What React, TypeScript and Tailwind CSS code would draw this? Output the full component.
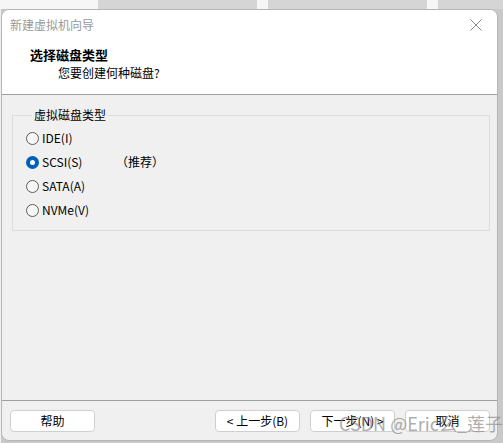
import { useState } from 'react'

const font = { fontFamily: '"Noto Sans CJK SC", "Noto Sans", sans-serif' }

type DiskType = 'ide' | 'scsi' | 'sata' | 'nvme'

const diskTypes: { id: DiskType; label: string; note?: string }[] = [
  { id: 'ide', label: 'IDE(I)' },
  { id: 'scsi', label: 'SCSI(S)', note: '（推荐）' },
  { id: 'sata', label: 'SATA(A)' },
  { id: 'nvme', label: 'NVMe(V)' },
]

function Radio({ checked }: { checked: boolean }) {
  if (checked) {
    return (
      <span className="w-[13px] h-[13px] rounded-full bg-[#005fb8] flex items-center justify-center shrink-0">
        <span className="w-[5px] h-[5px] rounded-full bg-white" />
      </span>
    )
  }
  return <span className="w-[13px] h-[13px] rounded-full border border-[#5c5c5c] bg-[#f7f7f7] shrink-0" />
}

function Button({ children }: { children: React.ReactNode }) {
  return (
    <button className="w-[85px] h-[22px] bg-white border border-[#cfcfcf] rounded-[4px] text-[12px] leading-[20px] text-black">
      {children}
    </button>
  )
}

export default function App() {
  const [selected, setSelected] = useState<DiskType>('scsi')

  return (
    <div className="w-[503px] h-[443px] bg-[#c9c9c9] relative overflow-hidden" style={font}>
      {/* tabs of the window behind */}
      <div className="h-[9px] bg-[#f6f6f6] flex">
        <div className="ml-[98px] w-[159px] bg-[#d5d5d5]" />
        <div className="ml-[11px] w-[159px] bg-[#d5d5d5]" />
        <div className="ml-[11px] flex-1 bg-[#d5d5d5]" />
      </div>

      <div className="absolute left-0 top-[9px] w-[1px] h-[434px] bg-[#f0f0f0]" />

      <div className="ml-[1px] w-[497px] h-[432px] rounded-[8px] border border-[#b5b5b5] bg-[#f0f0f0] flex flex-col overflow-hidden">
        {/* title bar */}
        <div className="h-[29px] bg-white flex items-center justify-between pl-[8px] pr-[15px]">
          <span className="text-[12px] text-[#999999]">新建虚拟机向导</span>
          <svg width="12" height="12" viewBox="0 0 12 12" className="mt-[1px]">
            <path d="M0.5 0.5 L11.5 11.5 M11.5 0.5 L0.5 11.5" stroke="#8a8a8a" strokeWidth="1" />
          </svg>
        </div>

        {/* header */}
        <div className="h-[56px] bg-white pt-[7px] border-b border-[#a0a0a0]">
          <div className="pl-[28px] text-[13px] font-bold leading-[18px] text-black">选择磁盘类型</div>
          <div className="pl-[56px] text-[12px] leading-[18px] text-black">您要创建何种磁盘?</div>
        </div>

        {/* body */}
        <div className="flex-1 pt-[12px] px-[10px]">
          <fieldset className="border border-[#dcdcdc] w-[478px] pl-[13px] pb-[8px]">
            <legend className="ml-[6px] px-[2px] text-[12px] leading-[16px] text-black">虚拟磁盘类型</legend>
            <div className="pt-[3px] flex flex-col">
              {diskTypes.map(d => (
                <label
                  key={d.id}
                  onClick={() => setSelected(d.id)}
                  className="h-[24px] flex items-center gap-[3px] text-[12px] text-black cursor-default"
                >
                  <Radio checked={selected === d.id} />
                  <span className="w-[71px]">{d.label}</span>
                  {d.note && <span>{d.note}</span>}
                </label>
              ))}
            </div>
          </fieldset>
        </div>

        {/* footer */}
        <div className="h-[40px] border-t border-[#a0a0a0] flex items-start pt-[9px] pl-[8px]">
          <Button>帮助</Button>
          <div className="ml-[120px] flex gap-[10px]">
            <Button>&lt; 上一步(B)</Button>
            <Button>下一步(N) &gt;</Button>
            <Button>取消</Button>
          </div>
        </div>
      </div>

      {/* watermark */}
      <div className="absolute left-[339px] top-[411px] text-[18px] leading-[24px] text-[#8c8c8c] opacity-70 pointer-events-none whitespace-nowrap">
        CSDN @Eric么_莲子
      </div>
    </div>
  )
}
